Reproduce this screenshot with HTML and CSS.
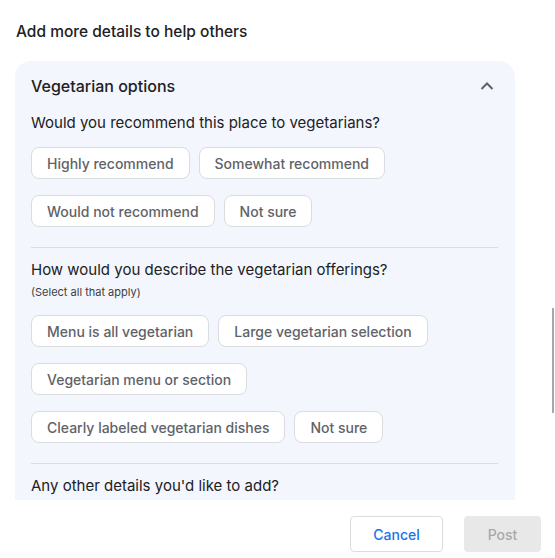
FILE: index.html
```html
<!DOCTYPE html>
<html lang="en">
<head>
  <meta charset="UTF-8">
  <meta name="viewport" content="width=device-width, initial-scale=1.0">
  <title>Add more details</title>
  <link rel="stylesheet" href="styles.css">
</head>
<body>
  <div class="dialog">
    <div class="scroll">
      <h2 class="heading">Add more details to help others</h2>

      <div class="card">
        <div class="card-head">
          <span class="card-title">Vegetarian options</span>
          <svg class="chevron" width="24" height="24" viewBox="0 0 24 24">
            <polyline points="6.5,15 12,9.5 17.5,15" fill="none" stroke="#5f6368" stroke-width="2"/>
          </svg>
        </div>

        <p class="question">Would you recommend this place to vegetarians?</p>
        <div class="chips">
          <button class="chip">Highly recommend</button>
          <button class="chip">Somewhat recommend</button>
          <button class="chip">Would not recommend</button>
          <button class="chip">Not sure</button>
        </div>

        <hr class="divider">

        <p class="question">How would you describe the vegetarian offerings?</p>
        <p class="hint">(Select all that apply)</p>
        <div class="chips">
          <button class="chip">Menu is all vegetarian</button>
          <button class="chip">Large vegetarian selection</button>
          <button class="chip">Vegetarian menu or section</button>
          <button class="chip">Clearly labeled vegetarian dishes</button>
          <button class="chip">Not sure</button>
        </div>

        <hr class="divider">

        <p class="question">Any other details you'd like to add?</p>
      </div>

      <div class="scrollbar"></div>
    </div>

    <div class="footer">
      <button class="btn cancel">Cancel</button>
      <button class="btn post" disabled>Post</button>
    </div>
  </div>
</body>
</html>
```

FILE: styles.css
```css
body {
  margin: 0;
  background: #ffffff;
  font-family: Inter, 'Open Sans', Arial, sans-serif;
  color: #202124;
}

.dialog {
  width: 555px;
  height: 558px;
}

.scroll {
  position: relative;
  height: 500px;
  overflow: hidden;
  padding: 0 40px 0 15px;
  box-sizing: border-box;
}

.heading {
  margin: 22px 0 19px 1px;
  font-size: 15.5px;
  line-height: 20px;
  font-weight: 500;
}

.card {
  background: #f3f6fc;
  border-radius: 16px 16px 0 0;
  padding: 13px 17px 30px 16px;
  min-height: 500px;
}

.card-head {
  display: flex;
  align-items: center;
  justify-content: space-between;
  height: 24px;
}

.card-title {
  font-size: 16px;
  font-weight: 500;
  line-height: 24px;
}

.chevron {
  margin-right: -1px;
}

.question {
  margin: 15px 0 0;
  font-size: 15px;
  line-height: 20px;
}

.divider + .question {
  margin-top: 12px;
}

.hint {
  margin: 4px 0 0;
  font-size: 11px;
  line-height: 16px;
  color: #3c4043;
}

.chips {
  display: flex;
  flex-wrap: wrap;
  gap: 16px 9px;
  margin-top: 14px;
}

.hint + .chips {
  margin-top: 15px;
}

.chip {
  height: 32px;
  padding: 0 15px;
  border: 1px solid #dadce0;
  border-radius: 8px;
  background: #ffffff;
  color: #5f6368;
  font-family: inherit;
  font-size: 14px;
  font-weight: 500;
}

.divider {
  margin: 20px 0 0;
  border: none;
  border-top: 1px solid #dadce0;
}

.scrollbar {
  position: absolute;
  right: 1px;
  top: 308px;
  width: 2px;
  height: 105px;
  background: #a8a8a8;
}

.footer {
  display: flex;
  justify-content: flex-end;
  gap: 21px;
  padding: 16px 14px 0 0;
}

.btn {
  height: 36px;
  border-radius: 4px;
  font-family: inherit;
  font-size: 14px;
  font-weight: 500;
}

.cancel {
  width: 93px;
  background: #ffffff;
  border: 1px solid #dadce0;
  color: #1a73e8;
}

.post {
  width: 77px;
  background: #e8e8e8;
  border: none;
  color: #a8a8a8;
}
```
